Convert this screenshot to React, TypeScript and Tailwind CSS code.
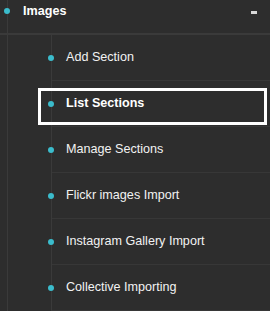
const items = [
  "Add Section",
  "List Sections",
  "Manage Sections",
  "Flickr images Import",
  "Instagram Gallery Import",
  "Collective Importing",
];

export default function App() {
  return (
    <div
      className="w-[270px] h-[311px] overflow-hidden bg-[#2d2d2d] text-white"
      style={{ fontFamily: '"Liberation Sans", Arial, sans-serif' }}
    >
      <div className="ml-[7px] h-full border-l border-[#3a3a3a]">
        {/* header */}
        <div className="h-[33px]">
          <div className="flex h-[22px] items-center">
            <span className="-ml-[4px] h-[6px] w-[6px] rounded-full bg-[#3bbccc]" />
            <span className="ml-[13px] text-[12.6px] font-bold leading-none text-white">Images</span>
            <span className="ml-auto mr-[13px] mt-[3px] h-[3px] w-[6px] bg-[#d8d8d8]" />
          </div>
        </div>
        <div className="-ml-[8px] h-[2px] bg-[#3a3a3a]" />

        {/* sub items */}
        <ul className="ml-[43px] border-l border-[#3a3a3a]">
          {items.map((label, i) => {
            const active = i === 1;
            return (
              <li key={label} className="relative flex h-[46px] items-center border-b border-[#373737]">
                <span className="-ml-[4px] h-[6px] w-[6px] rounded-full bg-[#3bbccc]" />
                <span
                  className={
                    active
                      ? "ml-[12px] text-[12.6px] font-bold text-white"
                      : "ml-[12px] text-[12.6px] text-[#f2f2f2]"
                  }
                >
                  {label}
                </span>
                {active && (
                  <span className="absolute -left-[14px] top-[7px] h-[37px] w-[229px] border-[3px] border-white" />
                )}
              </li>
            );
          })}
        </ul>
      </div>
    </div>
  );
}
